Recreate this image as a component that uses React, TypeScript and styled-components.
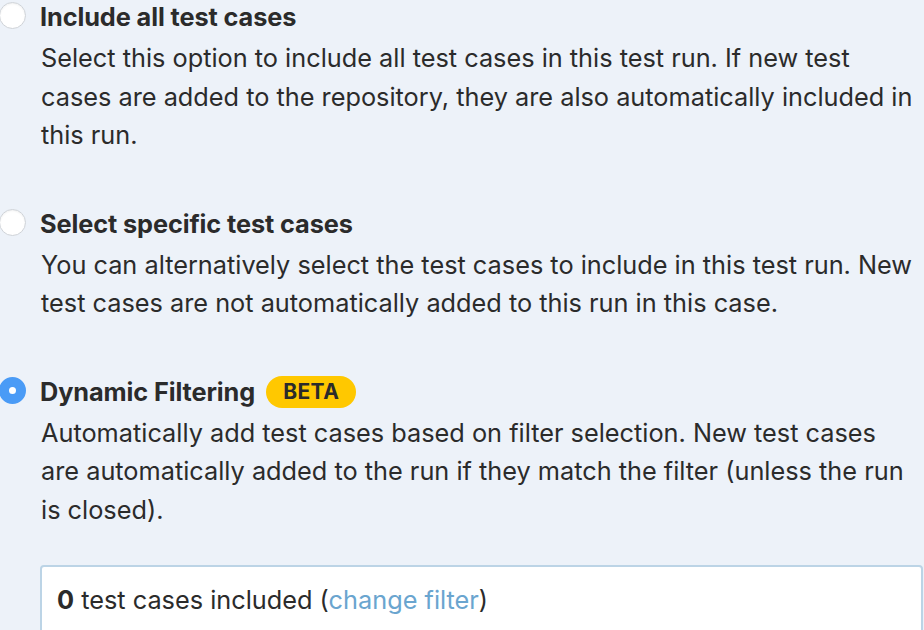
import * as React from 'react';
import styled, { createGlobalStyle } from 'styled-components';

const GlobalStyle = createGlobalStyle`
  html, body {
    margin: 0;
    padding: 0;
    background: #edf2f9;
  }
  body {
    font-family: Inter, "Noto Sans", sans-serif;
    color: #2b2b2b;
  }
`;

interface IOption {
  title: string;
  description: string;
  checked?: boolean;
  beta?: boolean;
}

const options: IOption[] = [
  {
    title: 'Include all test cases',
    description:
      'Select this option to include all test cases in this test run. If new test cases are added to the repository, they are also automatically included in this run.',
  },
  {
    title: 'Select specific test cases',
    description:
      'You can alternatively select the test cases to include in this test run. New test cases are not automatically added to this run in this case.',
  },
  {
    title: 'Dynamic Filtering',
    description:
      'Automatically add test cases based on filter selection. New test cases are automatically added to the run if they match the filter (unless the run is closed).',
    checked: true,
    beta: true,
  },
];

const App: React.FunctionComponent = () => {
  return (
    <Page>
      <GlobalStyle />
      {options.map(option => (
        <Option key={option.title}>
          <LabelRow>
            <Radio $checked={!!option.checked} />
            <Title>{option.title}</Title>
            {option.beta && <Badge>BETA</Badge>}
          </LabelRow>
          <Description>{option.description}</Description>
        </Option>
      ))}
      <FilterBox>
        <strong>0</strong> test cases included (<FilterLink href="#">change filter</FilterLink>)
      </FilterBox>
    </Page>
  );
};

export default App;

const Page = styled.div`
  width: 924px;
  height: 630px;
  overflow: hidden;
  box-sizing: border-box;
`;

const Option = styled.section`
  & + & {
    margin-top: 52px;
  }
`;

const LabelRow = styled.div`
  display: flex;
  align-items: center;
  height: 34px;
`;

const Radio = styled.span<{ $checked: boolean }>`
  flex: none;
  box-sizing: border-box;
  width: 27px;
  height: 27px;
  margin: -3px 14px 0 -1px;
  border-radius: 50%;
  background: #fff;
  border: ${p => (p.$checked ? '10px solid #4a9bf6' : '1.5px solid #cfd3d8')};
  box-shadow: ${p => (p.$checked ? 'none' : 'inset 0 1px 2px rgba(0,0,0,0.06)')};
`;

const Title = styled.span`
  font-size: 25.3px;
  line-height: 34px;
  font-weight: 700;
  letter-spacing: -0.1px;
`;

const Badge = styled.span`
  margin-left: 11px;
  height: 32px;
  padding: 0 17px;
  border-radius: 16px;
  background: #ffc800;
  font-size: 21px;
  font-weight: 700;
  line-height: 32px;
  letter-spacing: 0.4px;
`;

const Description = styled.p`
  width: 874px;
  margin: 5px 0 0 41px;
  font-size: 25.3px;
  line-height: 38.5px;
  font-weight: 400;
`;

const FilterBox = styled.div`
  margin: 36px 0 0 40px;
  width: 883px;
  height: 90px;
  box-sizing: border-box;
  background: #fff;
  border: 2px solid #bcd4e6;
  border-radius: 4px;
  padding: 16px 15px;
  font-size: 25.3px;
  line-height: 34px;

  strong {
    font-weight: 700;
  }
`;

const FilterLink = styled.a`
  color: #6aa5cf;
  text-decoration: none;
`;
